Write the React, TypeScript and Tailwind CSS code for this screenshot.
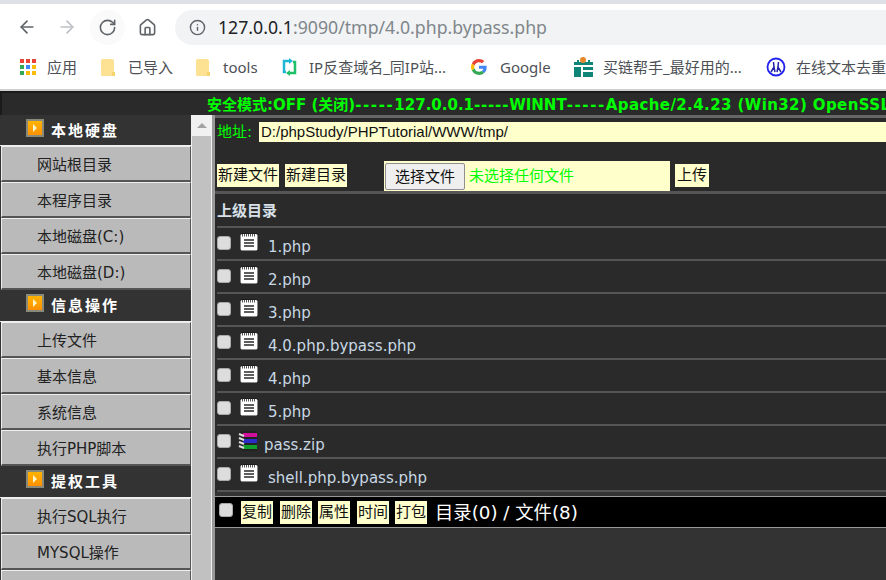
import { ArrowLeft, ArrowRight, RotateCw, Home, Info } from "lucide-react";

const cjk = "font-['Liberation_Sans','Noto_Sans_CJK_SC',sans-serif]";
const verdana = "font-['DejaVu_Sans','Noto_Sans_CJK_SC',sans-serif]";
const chrome = "font-['Noto_Sans','Noto_Sans_CJK_SC',sans-serif]";

function Folder() {
  return (
    <svg width="16" height="19" viewBox="0 0 16 19" className="shrink-0">
      <path d="M1 2.500Q1 1 2.500 1H12Q14 1 14 3V15L12 18H2.500Q1 18 1 16.500Z" fill="#fde293" />
      <path d="M12 14h3v4h-3z" fill="#f5d46e" />
    </svg>
  );
}

function Bookmark({ icon, label, className }: { icon: React.ReactNode; label: string; className: string }) {
  return (
    <div className={`flex items-center shrink-0 ${className}`}>
      {icon}
      <span className={`text-[15px] text-[#4d5156] whitespace-nowrap ${chrome}`}>{label}</span>
    </div>
  );
}

function AppsIcon() {
  const colors = ["#ea4335", "#ea4335", "#ea4335", "#34a853", "#4285f4", "#fbbc04", "#34a853", "#fbbc04", "#fbbc04"];
  return (
    <div className="grid grid-cols-3 gap-[2px] w-[16px] mr-[11px]">
      {colors.map((c, i) => (
        <span key={i} className="w-[4px] h-[4px]" style={{ background: c }} />
      ))}
    </div>
  );
}

function CropIcon() {
  return (
    <svg width="18" height="18" viewBox="0 0 18 18" className="mr-[11px]">
      <path d="M9 3H4v11h2" fill="none" stroke="#1fb6d8" strokeWidth="2.500" />
      <path d="M9 0v6l4-3z" fill="#1fb6d8" />
      <path d="M10 15h5V4h-2" fill="none" stroke="#1fc06a" strokeWidth="2.500" />
      <path d="M10 18v-6l-4 3z" fill="#1fc06a" />
    </svg>
  );
}

function GoogleIcon() {
  return (
    <svg width="16" height="16" viewBox="0 0 48 48" className="mr-[13px]">
      <path fill="#EA4335" d="M24 9.500c3.500 0 6.700 1.300 9.100 3.500l6.800-6.800C35.800 2.400 30.300 0 24 0 14.600 0 6.500 5.400 2.600 13.200l7.900 6.200C12.400 13.600 17.700 9.500 24 9.500z" />
      <path fill="#4285F4" d="M47 24.500c0-1.600-.1-3.100-.4-4.500H24v9h12.900c-.6 3-2.200 5.500-4.800 7.200l7.700 6C44.300 38 47 31.800 47 24.500z" />
      <path fill="#FBBC05" d="M10.500 28.600c-.5-1.400-.8-3-.8-4.600s.3-3.200.8-4.600l-7.900-6.200C.9 16.500 0 20.100 0 24s.9 7.500 2.600 10.800l7.900-6.200z" />
      <path fill="#34A853" d="M24 48c6.500 0 11.900-2.100 15.900-5.800l-7.700-6c-2.200 1.400-4.900 2.300-8.200 2.300-6.300 0-11.600-4.100-13.500-9.900l-7.900 6.200C6.500 42.600 14.600 48 24 48z" />
    </svg>
  );
}

function ChainIcon() {
  return (
    <svg width="19" height="20" viewBox="0 0 19 20" className="mr-[10px]">
      <path d="M0 5h3V3h2v2h9V3h2v2h3v3H0zM0 10h7v10H0zM9 10h10v3H9zM9 15h10v5H9z" fill="#0f8577" />
      <circle cx="9" cy="3" r="3" fill="#e8882c" />
    </svg>
  );
}

function KKIcon() {
  return (
    <svg width="20" height="20" viewBox="0 0 20 20" className="mr-[10px]">
      <circle cx="10" cy="10" r="8.500" fill="none" stroke="#2222ee" strokeWidth="1.800" />
      <path d="M7.500 5L8 10L5 15M8 10L9 15M12.500 5L12 10L15 15M12 10L11 15" fill="none" stroke="#2222aa" strokeWidth="1.500" />
    </svg>
  );
}

function SectionTitle({ label, first }: { label: string; first?: boolean }) {
  return (
    <div className={`${first ? "h-[31px]" : "h-[32px]"} bg-[#333333] flex items-center pt-[2px] pl-[26px] border-b border-[#eeeeee]`}>
      <span className="w-[18px] h-[18px] bg-gradient-to-b from-[#ffb300] to-[#ff9000] border-2 border-[#8a8a7a] flex items-center justify-center mb-[7px]">
        <span className="border-y-[4px] border-l-[4px] border-y-transparent border-l-[#fff6c8]" />
      </span>
      <span className={`ml-[7px] text-[15px] font-bold tracking-[2px] text-white ${verdana}`}>{label}</span>
    </div>
  );
}

function SideItem({ label }: { label: string }) {
  return (
    <div className="h-[36px] box-border bg-[#bababa] border-t border-l border-[#eeeeee] border-r border-r-[#555555] border-b-2 border-b-[#555555] ml-px flex items-center pt-[3px] pl-[35px] text-[15px] text-[#222222] whitespace-nowrap">
      <span className={verdana}>{label}</span>
    </div>
  );
}

function NoteIcon() {
  return (
    <svg width="18" height="18" viewBox="0 0 18 18" className="shrink-0">
      <rect x="0" y="0.500" width="18" height="17.500" rx="2" fill="#111" />
      <rect x="0.500" y="1" width="17" height="16.500" rx="1.500" fill="#ffffff" />
      <path d="M2.500 1v2.500M4.500 1v2.500M6.500 1v2.500M8.500 1v2.500M10.500 1v2.500M12.500 1v2.500M14.500 1v2.500" stroke="#555" />
      <path d="M4 7h10M4 10h10M4 13h10" stroke="#2a2a2a" strokeWidth="1.500" />
    </svg>
  );
}

function ZipIcon() {
  return (
    <svg width="20" height="20" viewBox="0 0 20 20" className="shrink-0">
      <path d="M2 1l4-1h12l1 2v16l-1 2H5l-3-2z" fill="#222" />
      <rect x="5" y="2" width="14" height="4" fill="#d0109a" />
      <rect x="5" y="8" width="14" height="4" fill="#2b2bc8" />
      <rect x="5" y="14" width="14" height="4" fill="#0ea02a" />
      <path d="M1 3l5 2M1 7l5 2M1 11l5 2M1 15l5 2" stroke="#ddd" strokeWidth="2" />
    </svg>
  );
}

function Check({ className = "" }: { className?: string }) {
  return <span className={`w-[14px] h-[14px] rounded-[3px] bg-[#dddddd] border border-[#aaaaaa] shrink-0 ${className}`} />;
}

function FileRow({ name, zip }: { name: string; zip?: boolean }) {
  return (
    <div className="h-[33px] box-border border-b-2 border-[#555555] flex items-start whitespace-nowrap">
      <Check className="mt-[8px]" />
      <span className={`mt-[5px] ${zip ? "ml-[7px]" : "ml-[9px]"}`}>{zip ? <ZipIcon /> : <NoteIcon />}</span>
      <span className={`mt-[11px] ${zip ? "ml-[6px]" : "ml-[10px]"} text-[15px] leading-[17px] text-[#c8d8e4] ${verdana}`}>{name}</span>
    </div>
  );
}

function YellowBtn({ label, className = "" }: { label: string; className?: string }) {
  return (
    <span className={`bg-[#ffffcc] text-[#111] text-[15px] leading-[23px] h-[23px] px-[1px] whitespace-nowrap ${verdana} ${className}`}>{label}</span>
  );
}

const files = ["1.php", "2.php", "3.php", "4.0.php.bypass.php", "4.php", "5.php"];

export default function App() {
  return (
    <div className={`w-[886px] h-[580px] overflow-hidden bg-white flex flex-col ${cjk}`}>
      <div className="h-[4px] bg-[#dee1e6] shrink-0" />
      {/* toolbar */}
      <div className="h-[46px] shrink-0 flex items-center pl-[17px]">
        <ArrowLeft size={20} color="#5f6368" strokeWidth={2} />
        <ArrowRight size={20} color="#bdc1c6" strokeWidth={2} className="ml-[20px]" />
        <div className="ml-[13px] w-[35px] h-[35px] rounded-full bg-[#fafafa] flex items-center justify-center shrink-0">
          <RotateCw size={19} color="#5f6368" strokeWidth={2} />
        </div>
        <Home size={19} color="#5f6368" strokeWidth={2} className="ml-[13px]" />
        <div className="ml-[18px] h-[35px] flex-1 rounded-l-[18px] bg-[#f1f3f4] flex items-center pl-[14px]">
          <Info size={17} color="#5f6368" strokeWidth={2} />
          <span className={`ml-[12px] text-[17.700px] text-[#202124] whitespace-nowrap ${chrome}`}>
            127.0.0.1<span className="text-[#80868b]">:9090/tmp/4.0.php.bypass.php</span>
          </span>
        </div>
      </div>
      {/* bookmarks */}
      <div className="h-[41px] shrink-0 flex items-center pl-[20px] pb-[5px] overflow-hidden border-b-2 border-[#d0d0d0]">
        <Bookmark icon={<AppsIcon />} label="应用" className="w-[80px]" />
        <Bookmark icon={<span className="mr-[12px]"><Folder /></span>} label="已导入" className="w-[95px]" />
        <Bookmark icon={<span className="mr-[12px]"><Folder /></span>} label="tools" className="w-[85px]" />
        <Bookmark icon={<CropIcon />} label="IP反查域名_同IP站..." className="w-[191px]" />
        <Bookmark icon={<GoogleIcon />} label="Google" className="w-[103px]" />
        <Bookmark icon={<ChainIcon />} label="买链帮手_最好用的..." className="w-[192px]" />
        <Bookmark icon={<KKIcon />} label="在线文本去重" className="w-[120px]" />
      </div>
      {/* server status bar */}
      <div className="h-[24px] shrink-0 bg-[#2a2a2a] border-t-2 border-l-2 border-[#1b1b1b] pl-[205px] overflow-hidden whitespace-nowrap">
        <span className={`text-[15px] leading-[22px] font-bold text-[#00ff00] ${verdana}`}>
          安全模式:OFF (关闭)
          <span className="tracking-[1.600px]">-----</span>
          127.0.0.1
          <span className="tracking-[0.800px]">-----</span>
          WINNT
          <span className="tracking-[1.600px]">-----</span>
          <span className="tracking-[0.400px]">Apache/2.4.23 (Win32) OpenSSL</span>
        </span>
      </div>
      <div className="flex-1 min-h-0 flex bg-[#333333] overflow-hidden">
        {/* menu */}
        <div className="w-[191px] shrink-0 overflow-hidden">
          <SectionTitle label="本地硬盘" first />
          <SideItem label="网站根目录" />
          <SideItem label="本程序目录" />
          <SideItem label="本地磁盘(C:)" />
          <SideItem label="本地磁盘(D:)" />
          <SectionTitle label="信息操作" />
          <SideItem label="上传文件" />
          <SideItem label="基本信息" />
          <SideItem label="系统信息" />
          <SideItem label="执行PHP脚本" />
          <SectionTitle label="提权工具" />
          <SideItem label="执行SQL执行" />
          <SideItem label="MYSQL操作" />
          <SideItem label="" />
        </div>
        {/* scrollbar */}
        <div className="w-[21px] shrink-0 bg-[#f1f1f1] flex flex-col items-center pt-[8px]">
          <span className="border-x-[5px] border-b-[5px] border-x-transparent border-b-[#a3a3a3]" />
          <div className="mt-[8px] w-[19px] flex-1 bg-[#c1c1c1]" />
        </div>
        {/* file manager */}
        <div className="flex-1 min-w-0 bg-[#333333] border-l-[3px] border-[#999999] overflow-hidden">
          <div className="bg-[#2a2a2a] border-t-[3px] border-[#666666] pl-[2px]">
            <div className="h-[43px] flex items-start pt-[4px] whitespace-nowrap">
              <span className={`w-[37px] text-[15px] leading-[20px] text-[#00ff00] ${verdana}`}>地址:</span>
              <div className="ml-[5px] flex-1 h-[20px] bg-[#ffffcc] pl-[2px] text-[15px] leading-[20px] text-[#111]">
                D:/phpStudy/PHPTutorial/WWW/tmp/
              </div>
            </div>
            <div className="h-[30px] flex items-start">
              <YellowBtn label="新建文件" className="mt-[3px]" />
              <YellowBtn label="新建目录" className="mt-[3px] ml-[6px]" />
              <div className="ml-[37px] w-[286px] h-[30px] bg-[#ffffcc] flex items-center">
                <span className="ml-[1px] w-[80px] h-[27px] box-border bg-[#efefef] border border-[#8f8f8f] rounded-[2px] text-[15px] leading-[25px] text-center text-[#111]">
                  选择文件
                </span>
                <span className="ml-[4px] text-[15px] text-[#00ff00]">未选择任何文件</span>
              </div>
              <YellowBtn label="上传" className="mt-[3px] ml-[5px] px-[2px]" />
            </div>
          </div>
          <div className="bg-[#2a2a2a] border-t-[3px] border-[#555555] pl-[2px]">
            <div className="h-[34px] box-border border-b-2 border-[#555555] flex items-center pt-[2px] whitespace-nowrap">
              <span className={`text-[15px] font-bold text-[#d8e0e8] ${verdana}`}>上级目录</span>
            </div>
            {files.map((f) => (
              <FileRow key={f} name={f} />
            ))}
            <FileRow name="pass.zip" zip />
            <FileRow name="shell.php.bypass.php" />
          </div>
          <div className="mt-[4px] h-[32px] box-border bg-black border-y border-[#999999] flex items-start pl-[4px] whitespace-nowrap">
            <Check className="mt-[6px]" />
            <div className={`mt-[4px] ml-[8px] flex items-center text-[15px] text-[#111] ${verdana}`}>
              <YellowBtn label="复制" />
              <YellowBtn label="删除" className="ml-[7px]" />
              <YellowBtn label="属性" className="ml-[6px]" />
              <YellowBtn label="时间" className="ml-[7px]" />
              <YellowBtn label="打包" className="ml-[6px]" />
              <span className="ml-[8px] text-[18.300px] leading-[23px] text-white">目录(0) / 文件(8)</span>
            </div>
          </div>
        </div>
      </div>
    </div>
  );
}
